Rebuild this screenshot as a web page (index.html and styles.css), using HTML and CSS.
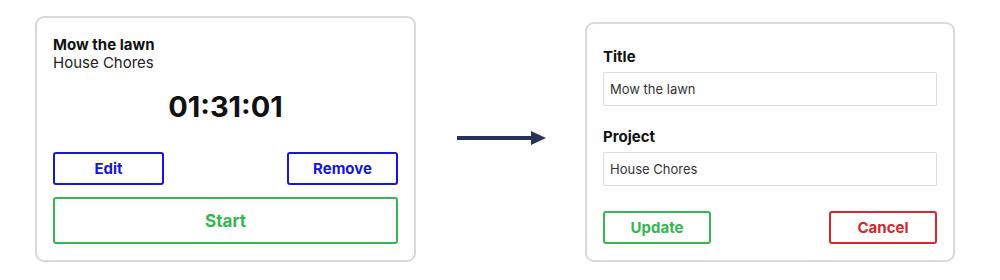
FILE: index.html
```html
<!DOCTYPE html>
<html lang="en">
<head>
    <meta charset="UTF-8" />
    <meta name="viewport" content="width=device-width, initial-scale=1.0" />
    <title>Timer Edit</title>
    <link rel="stylesheet" href="styles.css">
</head>
<body>

    <div class="page">
        <div class="card timer-card">
            <div class="timer-title">Mow the lawn</div>
            <div class="timer-project">House Chores</div>
            <div class="timer-time">01:31:01</div>
            <div class="timer-actions">
                <button class="btn btn-blue">Edit</button>
                <button class="btn btn-blue">Remove</button>
            </div>
            <button class="btn btn-green btn-start">Start</button>
        </div>

        <div class="arrow">
            <svg width="89" height="16" viewBox="0 0 89 16">
                <rect x="0" y="6" width="76" height="4" fill="#2a3158" />
                <polygon points="74,1 89,8 74,15" fill="#2a3158" />
            </svg>
        </div>

        <div class="card form-card">
            <label class="form-label">Title</label>
            <input class="form-input" type="text" value="Mow the lawn" />
            <label class="form-label label-second">Project</label>
            <input class="form-input" type="text" value="House Chores" />
            <div class="form-actions">
                <button class="btn btn-green">Update</button>
                <button class="btn btn-red">Cancel</button>
            </div>
        </div>
    </div>

</body>
</html>
```

FILE: styles.css
```css
body {
    margin: 0;
    background: #fff;
    font-family: Inter, 'Liberation Sans', Arial, sans-serif;
    color: #111;
}

.page {
    display: flex;
    align-items: flex-start;
    padding: 16px 0 0 35px;
    height: 246px;
}

.card {
    box-sizing: border-box;
    border: 2px solid #d9d9d9;
    border-radius: 9px;
    background: #fff;
    display: flex;
    flex-direction: column;
}

.timer-card {
    width: 381px;
    height: 246px;
    padding: 18px 16px 16px 16px;
}

.timer-title {
    font-size: 15px;
    font-weight: 700;
    line-height: 18px;
}

.timer-project {
    font-size: 15px;
    line-height: 18px;
    color: #222;
}

.timer-time {
    text-align: center;
    font-size: 29px;
    font-weight: 700;
    line-height: 34px;
    margin-top: 18px;
}

.timer-actions,
.form-actions {
    display: flex;
    justify-content: space-between;
}

.timer-actions {
    margin-top: 28px;
}

.btn {
    box-sizing: border-box;
    background: #fff;
    border: 2px solid;
    border-radius: 3px;
    font-family: inherit;
    font-size: 15px;
    font-weight: 700;
    width: 111px;
    height: 33px;
    padding: 0;
}

.btn-blue {
    color: #1616d8;
    border-color: #1616d8;
}

.btn-green {
    color: #34b650;
    border-color: #34b650;
}

.btn-red {
    color: #d6262e;
    border-color: #d6262e;
}

.btn-start {
    width: 100%;
    height: 47px;
    margin-top: 12px;
    font-size: 17px;
}

.arrow {
    display: flex;
    align-items: center;
    height: 246px;
    margin: 0 39px 0 41px;
}

.arrow svg {
    display: block;
    margin-top: -2px;
}

.form-card {
    width: 370px;
    height: 240px;
    margin-top: 6px;
    padding: 24px 16px 16px 16px;
}

.form-label {
    font-size: 15px;
    font-weight: 700;
    line-height: 18px;
}

.label-second {
    margin-top: 22px;
}

.form-input {
    box-sizing: border-box;
    height: 34px;
    margin-top: 6px;
    border: 1px solid #dcdcdc;
    border-radius: 2px;
    padding: 0 6px;
    font-family: inherit;
    font-size: 13px;
    color: #333;
    outline: none;
}

.form-actions {
    margin-top: 25px;
}

.form-actions .btn {
    width: 108px;
}
```
